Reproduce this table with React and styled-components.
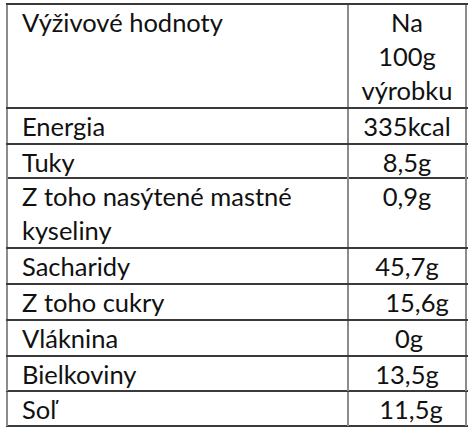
import React from 'react'
import styled, { createGlobalStyle } from 'styled-components'

const GlobalStyle = createGlobalStyle`
    html, body {
        margin: 0;
        padding: 0;
        background: #ffffff;
    }
    body {
        font-family: Lato, "Open Sans", "Noto Sans", sans-serif;
        color: #111111;
    }
`
const Page = styled.div`
    width: 474px;
    height: 429px;
    padding: 3px 0 0 6px;
    box-sizing: border-box;
    background: #ffffff;
`
const Table = styled.div`
    width: 462px;
    border-top: 2px solid #3a3a3a;
    display: flex;
    flex-direction: column;
`
const Row = styled.div`
    display: grid;
    grid-template-columns: 341px 120px;
    height: ${props => props.h}px;
    box-sizing: border-box;
    border-bottom: 2px solid #3a3a3a;
`
const Cell = styled.div`
    border-left: 2px solid #8c8c8c;
    font-size: 25.5px;
    line-height: 34px;
    box-sizing: border-box;
`
const NameCell = styled(Cell)`
    padding: 0 8px 0 14px;
`
const ValueCell = styled(Cell)`
    border-right: 2px solid #8c8c8c;
    text-align: center;
    padding: 0 0 0 ${props => props.shift || 0}px;
`

const rows = [
    { name: 'Energia', value: '335kcal', h: 36 },
    { name: 'Tuky', value: '8,5g', h: 34 },
    { name: 'Z toho nasýtené mastné kyseliny', value: '0,9g', h: 70 },
    { name: 'Sacharidy', value: '45,7g', h: 36 },
    { name: 'Z toho cukry', value: '15,6g', h: 36, shift: 20 },
    { name: 'Vláknina', value: '0g', h: 36, shift: 4 },
    { name: 'Bielkoviny', value: '13,5g', h: 35 },
    { name: 'Soľ', value: '11,5g', h: 35, shift: 8 },
]

export default function App() {
    return (
        <Page>
            <GlobalStyle />
            <Table>
                <Row h={104}>
                    <NameCell>Výživové hodnoty</NameCell>
                    <ValueCell>Na<br />100g<br />výrobku</ValueCell>
                </Row>
                {rows.map(r => (
                    <Row h={r.h} key={r.name}>
                        <NameCell>{r.name}</NameCell>
                        <ValueCell shift={r.shift}>{r.value}</ValueCell>
                    </Row>
                ))}
            </Table>
        </Page>
    )
}
